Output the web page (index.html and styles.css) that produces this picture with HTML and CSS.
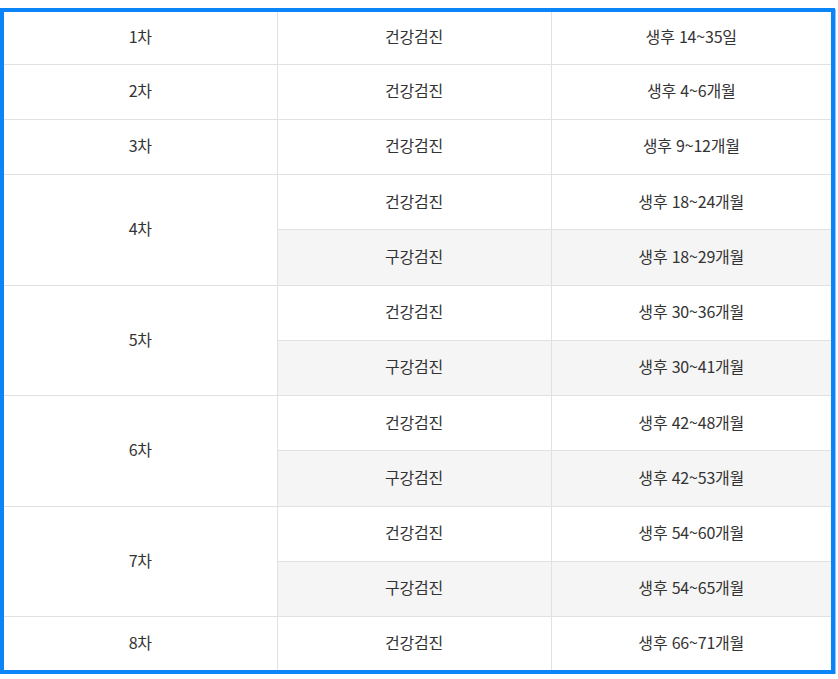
FILE: index.html
```html
<!DOCTYPE html>
<html lang="ko">
<head>
<meta charset="utf-8">
<link rel="stylesheet" href="styles.css">
</head>
<body>
<div class="frame">
  <table class="schedule">
    <colgroup>
      <col class="c1"><col class="c2"><col class="c3">
    </colgroup>
    <tbody>
      <tr class="first"><td>1차</td><td>건강검진</td><td>생후 14~35일</td></tr>
      <tr><td>2차</td><td>건강검진</td><td>생후 4~6개월</td></tr>
      <tr><td>3차</td><td>건강검진</td><td>생후 9~12개월</td></tr>
      <tr><td rowspan="2">4차</td><td>건강검진</td><td>생후 18~24개월</td></tr>
      <tr class="oral"><td>구강검진</td><td>생후 18~29개월</td></tr>
      <tr><td rowspan="2">5차</td><td>건강검진</td><td>생후 30~36개월</td></tr>
      <tr class="oral"><td>구강검진</td><td>생후 30~41개월</td></tr>
      <tr><td rowspan="2">6차</td><td>건강검진</td><td>생후 42~48개월</td></tr>
      <tr class="oral"><td>구강검진</td><td>생후 42~53개월</td></tr>
      <tr><td rowspan="2">7차</td><td>건강검진</td><td>생후 54~60개월</td></tr>
      <tr class="oral"><td>구강검진</td><td>생후 54~65개월</td></tr>
      <tr class="last"><td>8차</td><td>건강검진</td><td>생후 66~71개월</td></tr>
    </tbody>
  </table>
</div>
</body>
</html>
```

FILE: styles.css
```css
html, body {
  margin: 0;
  padding: 0;
  background: #ffffff;
}

.frame {
  margin-top: 8px;
  width: 835px;
  height: 666px;
  box-sizing: border-box;
  border: 4px solid #0a84f7;
  box-shadow: 1px 1px 0 0 #8cc4fb;
  overflow: hidden;
}

.schedule {
  width: 827px;
  table-layout: fixed;
  border-collapse: collapse;
  font-family: "Noto Sans CJK KR", "Noto Sans", sans-serif;
  font-size: 16px;
  color: #333333;
  letter-spacing: -0.2px;
}

.c1 { width: 273px; }
.c2 { width: 274px; }
.c3 { width: 280px; }

.schedule td {
  height: 51.25px;
  padding: 0 0 3px 0;
  text-align: center;
  vertical-align: middle;
  border: 1px solid #e1e1e1;
  background: #ffffff;
  line-height: 20px;
}

.schedule tr.first td {
  height: 48.5px;
  border-top: none;
}

.schedule tr.last td {
  height: 50px;
  border-bottom: none;
}

.schedule tr td:first-child {
  border-left: none;
}

.schedule tr td:last-child {
  border-right: none;
}

.schedule tr.oral td {
  background: #f5f5f5;
}

.schedule tr.oral td:first-child {
  border-left: 1px solid #e1e1e1;
}
```
